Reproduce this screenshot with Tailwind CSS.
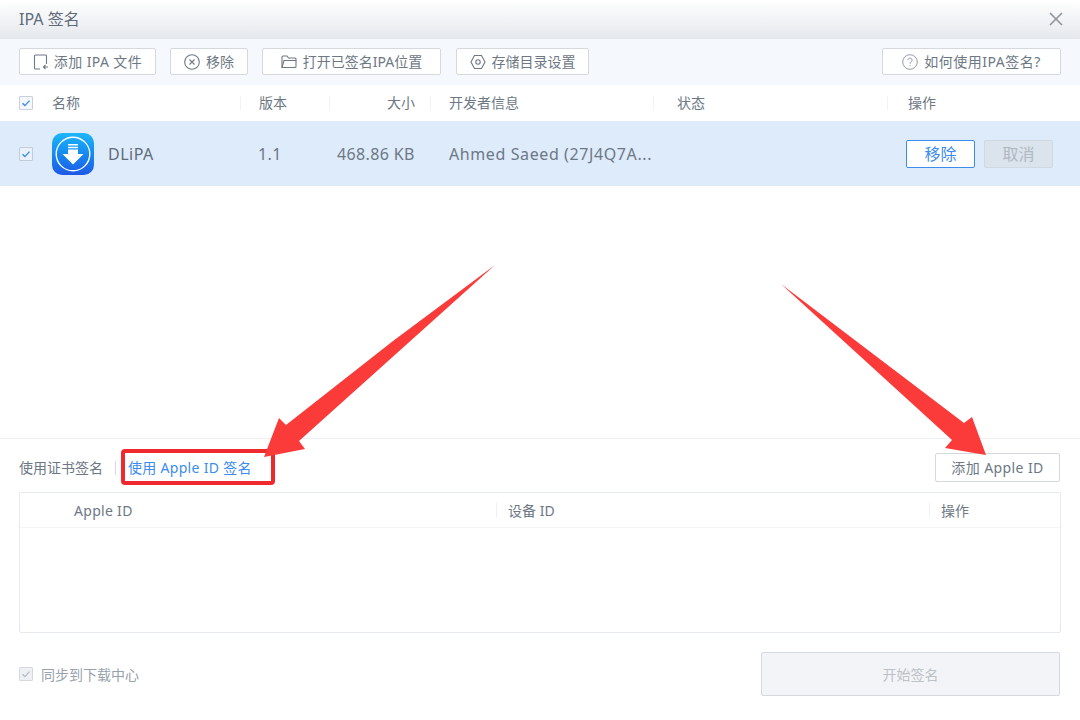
<!DOCTYPE html>
<html lang="en">
  <head>
    <meta charset="UTF-8" />
    <title>IPA 签名</title>
    <script src="https://cdn.jsdelivr.net/npm/@tailwindcss/browser@4"></script>
  </head>
  <body class="bg-white font-['Noto_Sans','Noto_Sans_CJK_SC',sans-serif] text-[14px] text-[#6d7885]">
    <div class="relative w-[1080px] h-[720px] overflow-hidden flex flex-col">
      <!-- title bar -->
      <header class="h-[39px] shrink-0 flex items-center justify-between pl-[19px] pr-[17px] rounded-t-lg bg-gradient-to-b from-white to-[#e5e8ed] border-b border-[#e3e7ec]">
        <span class="text-[16px] text-[#5f6b78]">IPA 签名</span>
        <svg class="w-[14px] h-[14px] text-[#8a929c]" viewBox="0 0 14 14" fill="none" stroke="currentColor" stroke-width="1.5"><path d="M1 1l12 12M13 1L1 13" /></svg>
      </header>

      <!-- toolbar -->
      <div class="h-[46px] shrink-0 flex items-center px-[19px] pb-px bg-[#f5f8fc]">
        <button class="w-[137px] h-[27px] flex items-center justify-center gap-[5px] bg-white border border-[#d5d9df] rounded-[2px]">
          <svg class="w-[16px] h-[16px]" viewBox="0 0 16 16" fill="none" stroke="currentColor" stroke-width="1.1"><path d="M7 15H2.5a1 1 0 0 1-1-1V2a1 1 0 0 1 1-1h10a1 1 0 0 1 1 1v8" /><path d="M15 13h-4M12.5 11l-2 2 2 2" /></svg>
          <span class="tracking-[0.4px]">添加 IPA 文件</span>
        </button>
        <button class="ml-[14px] w-[78px] h-[27px] flex items-center justify-center gap-[6px] bg-white border border-[#d5d9df] rounded-[2px]">
          <svg class="w-[16px] h-[16px]" viewBox="0 0 16 16" fill="none" stroke="currentColor" stroke-width="1.1"><circle cx="8" cy="8" r="7.3" /><path d="M5.5 5.5l5 5M10.5 5.5l-5 5" /></svg>
          <span>移除</span>
        </button>
        <button class="ml-[14px] w-[179px] h-[27px] flex items-center justify-center gap-[6px] bg-white border border-[#d5d9df] rounded-[2px]">
          <svg class="w-[16px] h-[14px]" viewBox="0 0 16 14" fill="none" stroke="currentColor" stroke-width="1.1"><path d="M1 12.5V2a1 1 0 0 1 1-1h4l1.5 2H14a1 1 0 0 1 1 1v1.5" /><path d="M1 12.5L3 5.5h12v6a1 1 0 0 1-1 1z" /></svg>
          <span>打开已签名IPA位置</span>
        </button>
        <button class="ml-[15px] w-[133px] h-[27px] flex items-center justify-center gap-[6px] bg-white border border-[#d5d9df] rounded-[2px]">
          <svg class="w-[16px] h-[16px]" viewBox="0 0 16 16" fill="none" stroke="currentColor" stroke-width="1.1"><path d="M4.5 1.5h7L15 8l-3.5 6.5h-7L1 8z" /><circle cx="8" cy="8" r="2.2" /></svg>
          <span>存储目录设置</span>
        </button>
        <button class="ml-auto w-[179px] h-[27px] flex items-center justify-center gap-[6px] bg-white border border-[#d5d9df] rounded-[2px]">
          <svg class="w-[16px] h-[16px] text-[#959da7]" viewBox="0 0 16 16" fill="none" stroke="currentColor" stroke-width="1"><circle cx="8" cy="8" r="7.3" /><path d="M5.9 6.2a2.1 2.1 0 1 1 3.3 1.7c-.8.5-1.2 1-1.2 1.9M8 11.2v1" /></svg>
          <span class="tracking-[0.5px]">如何使用IPA签名?</span>
        </button>
      </div>

      <!-- list header -->
      <div class="h-[36px] shrink-0 grid grid-cols-[240px_89px_101px_223px_234px_193px] items-center pb-px bg-white">
        <div class="flex items-center pl-[19px]">
          <span class="w-[14px] h-[14px] flex items-center justify-center bg-[#f4f7fb] border border-[#c9d0d9] rounded-[1px]">
            <svg class="w-[10px] h-[10px] text-[#3b8ced]" viewBox="0 0 10 10" fill="none" stroke="currentColor" stroke-width="1.4"><path d="M1.5 5.2l2.4 2.4 4.6-5" /></svg>
          </span>
          <span class="ml-[19px]">名称</span>
        </div>
        <div class="h-[14px] flex items-center pl-[18px] border-l border-[#f0f2f5]">版本</div>
        <div class="h-[14px] flex items-center justify-end pr-[15px] border-l border-[#f0f2f5]">大小</div>
        <div class="h-[14px] flex items-center pl-[18px] border-l border-[#f0f2f5]">开发者信息</div>
        <div class="h-[14px] flex items-center pl-[23px] border-l border-[#f0f2f5]">状态</div>
        <div class="h-[14px] flex items-center pl-[20px] border-l border-[#f0f2f5]">操作</div>
      </div>

      <!-- selected row -->
      <div class="h-[65px] shrink-0 grid grid-cols-[240px_89px_101px_223px_234px_193px] items-center bg-[#deebfb] text-[16px]">
        <div class="flex items-center pl-[19px]">
          <span class="w-[14px] h-[14px] flex items-center justify-center bg-[#eaf1fa] border border-[#c3ccd8] rounded-[1px]">
            <svg class="w-[10px] h-[10px] text-[#3b8ced]" viewBox="0 0 10 10" fill="none" stroke="currentColor" stroke-width="1.4"><path d="M1.5 5.2l2.4 2.4 4.6-5" /></svg>
          </span>
          <!-- app icon -->
          <span class="ml-[19px] mt-px w-[42px] h-[42px] rounded-[10px] flex items-center justify-center bg-gradient-to-b from-[#1fb6f8] to-[#1f58e6]">
            <svg class="w-[36px] h-[36px]" viewBox="0 0 36 36" fill="none">
              <circle cx="18" cy="18" r="16.8" stroke="white" stroke-width="1.4" />
              <path fill="white" d="M13 8h10v1.5H13zM13 10.8h10v1.5H13zM13 13.6h10V18h5.5L18 28.5 7.5 18H13z" />
            </svg>
          </span>
          <span class="ml-[14px] text-[#5f6c7b] tracking-[0.5px]">DLiPA</span>
        </div>
        <div class="pl-[18px] text-[#6d7885] tracking-[0.4px]">1.1</div>
        <div class="pl-[8px] text-[#6d7885] whitespace-nowrap tracking-[0.35px]">468.86 KB</div>
        <div class="pl-[19px] text-[#6d7885] whitespace-nowrap tracking-[0.6px]">Ahmed Saeed (27J4Q7A...</div>
        <div></div>
        <div class="flex items-center pl-[19px] gap-[9px]">
          <button class="w-[69px] h-[28px] bg-white border border-[#3b8ced] rounded-[2px] text-[#3b8ced]">移除</button>
          <button class="w-[69px] h-[28px] bg-[#dbe3ec] border border-[#d0d8e2] rounded-[2px] text-[#b0b8c2]">取消</button>
        </div>
      </div>

      <div class="flex-1"></div>

      <!-- bottom section -->
      <section class="h-[282px] shrink-0 border-t border-[#eef0f3] px-[19px]">
        <div class="h-[53px] flex items-center">
          <span class="mt-[4px]">使用证书签名</span>
          <span class="ml-[12px] mt-[4px] w-px h-[14px] bg-[#d9dde2]"></span>
          <span class="ml-[12px] mt-[4px] text-[#3b8ced] tracking-[0.3px]">使用 Apple ID 签名</span>
          <button class="ml-auto mr-px mt-[4px] w-[125px] h-[29px] bg-white border border-[#d5d9df] rounded-[2px] tracking-[0.4px]">添加 Apple ID</button>
        </div>

        <div class="h-[141px] border border-[#e6e9ed] rounded-[2px]">
          <div class="h-[35px] grid grid-cols-[476px_433px_1fr] items-center border-b border-[#f3f4f6]">
            <div class="pl-[54px] tracking-[0.3px]">Apple ID</div>
            <div class="h-[14px] flex items-center pl-[11px] border-l border-[#eef0f3]">设备 ID</div>
            <div class="h-[14px] flex items-center pl-[11px] border-l border-[#eef0f3]">操作</div>
          </div>
        </div>

        <div class="mt-[19px] flex items-center justify-between">
          <div class="flex items-center">
            <span class="w-[14px] h-[14px] flex items-center justify-center bg-[#eef0f3] border border-[#d5d9df] rounded-[1px]">
              <svg class="w-[10px] h-[10px] text-[#b4bbc4]" viewBox="0 0 10 10" fill="none" stroke="currentColor" stroke-width="1.3"><path d="M1.5 5.2l2.4 2.4 4.6-5" /></svg>
            </span>
            <span class="ml-[8px] text-[#98a2ad]">同步到下载中心</span>
          </div>
          <button class="mr-px w-[299px] h-[44px] bg-[#f2f4f7] border border-[#d5d9e0] rounded-[2px] text-[#bcc1c8]">开始签名</button>
        </div>
      </section>

      <!-- red annotations over the screenshot -->
      <div class="absolute left-[121px] top-[449px] w-[154px] h-[36px] border-[4px] border-[#ee2a2e] rounded-[4px]"></div>
      <svg class="absolute left-0 top-0 w-[1080px] h-[720px] pointer-events-none" viewBox="0 0 1080 720">
        <polygon fill="#fb3a3a" points="495,265 393,341 286,425 279,418 264,457 305,449 299,441" />
        <polygon fill="#fb3a3a" points="781,284 952,440 945,448 986,455 972,417 964,423" />
      </svg>
    </div>
  </body>
</html>
